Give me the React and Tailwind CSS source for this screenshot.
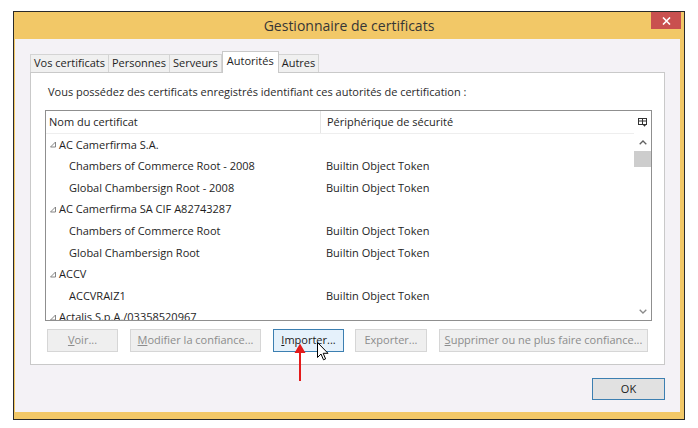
import React from "react";

const rows = [
  { name: "AC Camerfirma S.A.", parent: true },
  { name: "Chambers of Commerce Root - 2008", dev: "Builtin Object Token" },
  { name: "Global Chambersign Root - 2008", dev: "Builtin Object Token" },
  { name: "AC Camerfirma SA CIF A82743287", parent: true },
  { name: "Chambers of Commerce Root", dev: "Builtin Object Token" },
  { name: "Global Chambersign Root", dev: "Builtin Object Token" },
  { name: "ACCV", parent: true },
  { name: "ACCVRAIZ1", dev: "Builtin Object Token" },
  { name: "Actalis S.p.A./03358520967", parent: true },
];

const tabs = ["Vos certificats", "Personnes", "Serveurs", "Autorités", "Autres"];

function Btn({ children, left, w, active }) {
  return (
    <div
      className={`h-[23px] flex items-center justify-center border text-[11px] ${
        active
          ? "border-[#3c7fb1] bg-[#e5f1fb] text-[#1a1a1a]"
          : "border-[#d6d6d6] bg-[#efefef] text-[#8c8c8c]"
      }`}
      style={{ width: w, marginLeft: left }}
    >
      {children}
    </div>
  );
}

export default function App() {
  return (
    <div
      className="w-[698px] h-[428px] bg-white overflow-hidden pt-[11px] pl-[13px]"
      style={{ fontFamily: '"Open Sans", "Noto Sans", sans-serif' }}
    >
      <div className="relative w-[672px] h-[409px] border border-[#2a2a2a] bg-[#f2c867] flex flex-col">
        {/* title bar */}
        <div className="relative h-[27px] flex items-center justify-center text-[14px] text-[#363636]">
          Gestionnaire de certificats
          <div className="absolute right-[3px] top-0 w-[30px] h-[17px] bg-[#c9504f] flex items-center justify-center">
            <svg width="9" height="8" viewBox="0 0 9 8">
              <path d="M1 0.5 L8 7.5 M8 0.5 L1 7.5" stroke="#fff" strokeWidth="1.6" />
            </svg>
          </div>
        </div>

        {/* content */}
        <div className="flex-1 ml-[1px] mr-[4px] mb-[7px] bg-[#f4f2f6] pl-[15px] pt-[12px] relative">
          {/* tabs */}
          <div className="flex items-end h-[21px] text-[11px] text-[#1e1e1e]">
            {tabs.map((t, i) =>
              t === "Autorités" ? (
                <div
                  key={t}
                  className="relative z-10 h-[22px] -mb-[1px] px-[4px] bg-white border border-b-0 border-[#c9c9c9] flex items-start pt-[1px]"
                >
                  {t}
                </div>
              ) : (
                <div
                  key={t}
                  className={`h-[18px] px-[3px] bg-[#f0f0f0] border border-b-0 border-[#d4d4d4] flex items-center ${
                    i > 0 ? "-ml-[1px]" : ""
                  }`}
                >
                  {t}
                </div>
              )
            )}
          </div>

          {/* panel */}
          <div className="relative w-[635px] h-[293px] bg-white border border-[#c9c9c9] pt-[11px]">
            <div className="pl-[17px] text-[11px] text-[#2a2a2a] h-[16px] leading-[16px]">
              Vous possédez des certificats enregistrés identifiant ces autorités de certification :
            </div>

            {/* list */}
            <div className="ml-[14px] mt-[10px] w-[607px] h-[211px] border border-[#8f8f8f] bg-white flex text-[11px] text-[#1e1e1e]">
              <div className="flex-1 flex flex-col overflow-hidden">
                <div className="h-[23px] shrink-0 flex items-center border-b border-[#eeeeee]">
                  <div className="w-[275px] pl-[3px] border-r border-[#e5e5e5] h-full flex items-center">
                    Nom du certificat
                  </div>
                  <div className="pl-[6px]">Périphérique de sécurité</div>
                </div>
                {rows.map((r) => (
                  <div key={r.name} className="h-[21.6px] shrink-0 flex items-center">
                    <div className="w-[280px] flex items-center">
                      {r.parent ? (
                        <>
                          <svg width="9" height="7" viewBox="0 0 9 7" className="ml-[3px] mr-[1px]">
                            <path d="M6.5 1 L6.5 6 L1.5 6 Z" fill="none" stroke="#777" strokeWidth="0.9" />
                          </svg>
                          <span>{r.name}</span>
                        </>
                      ) : (
                        <span className="pl-[23px]">{r.name}</span>
                      )}
                    </div>
                    {r.dev && <div className="whitespace-nowrap">{r.dev}</div>}
                  </div>
                ))}
              </div>
              {/* scrollbar */}
              <div className="w-[17px] flex flex-col items-center">
                <div className="h-[23px] flex items-center justify-center">
                  <svg width="9" height="9" viewBox="0 0 9 9">
                    <rect x="0.5" y="0.5" width="8" height="6" fill="none" stroke="#333" />
                    <path d="M0.5 3 H8.5 M4.5 0.5 V6.5" stroke="#333" strokeWidth="1" />
                    <path d="M5 7 L8 7 L6.5 8.7 Z" fill="#333" />
                  </svg>
                </div>
                <div className="h-[17px] flex items-center justify-center">
                  <svg width="8" height="5" viewBox="0 0 8 5">
                    <path d="M0.7 4.3 L4 1 L7.3 4.3" fill="none" stroke="#606060" strokeWidth="1.3" />
                  </svg>
                </div>
                <div className="w-[17px] h-[16px] bg-[#cdcdcd]" />
                <div className="flex-1" />
                <div className="h-[17px] flex items-center justify-center">
                  <svg width="8" height="5" viewBox="0 0 8 5">
                    <path d="M0.7 0.7 L4 4 L7.3 0.7" fill="none" stroke="#8a8a8a" strokeWidth="1.3" />
                  </svg>
                </div>
              </div>
            </div>

            {/* buttons */}
            <div className="flex mt-[8px]">
              <Btn left={16} w={71}>
                <span><u>V</u>oir...</span>
              </Btn>
              <Btn left={12} w={131}>
                <span><u>M</u>odifier la confiance...</span>
              </Btn>
              <Btn left={12} w={71} active>
                <span><u>I</u>mporter...</span>
              </Btn>
              <Btn left={11} w={72}>
                <span>Exporter...</span>
              </Btn>
              <Btn left={12} w={209}>
                <span><u>S</u>upprimer ou ne plus faire confiance...</span>
              </Btn>
            </div>
          </div>

          {/* OK */}
          <div className="flex justify-end pr-[15px] mt-[13px]">
            <div className="w-[73px] h-[22px] border border-[#3c7fb1] bg-[#e1e1e1] flex items-center justify-center text-[11px] text-[#1a1a1a]">
              OK
            </div>
          </div>

          {/* red arrow annotation */}
          <svg
            className="absolute left-[278px] top-[304px]"
            width="14"
            height="40"
            viewBox="0 0 14 40"
          >
            <path d="M7 8 V38" stroke="#e41b1b" strokeWidth="2" />
            <path d="M1.5 10 L7 0.5 L12.5 10 Z" fill="#e41b1b" />
          </svg>

          {/* mouse cursor */}
          <svg
            className="absolute left-[302px] top-[303px]"
            width="12"
            height="19"
            viewBox="0 0 12 19"
          >
            <path
              d="M0.5 0.5 V15.5 L4 12 L6.5 17.8 L8.6 16.9 L6.2 11.3 L11 11.3 Z"
              fill="#fff"
              stroke="#000"
              strokeWidth="1"
              strokeLinejoin="round"
            />
          </svg>
        </div>
      </div>
    </div>
  );
}
